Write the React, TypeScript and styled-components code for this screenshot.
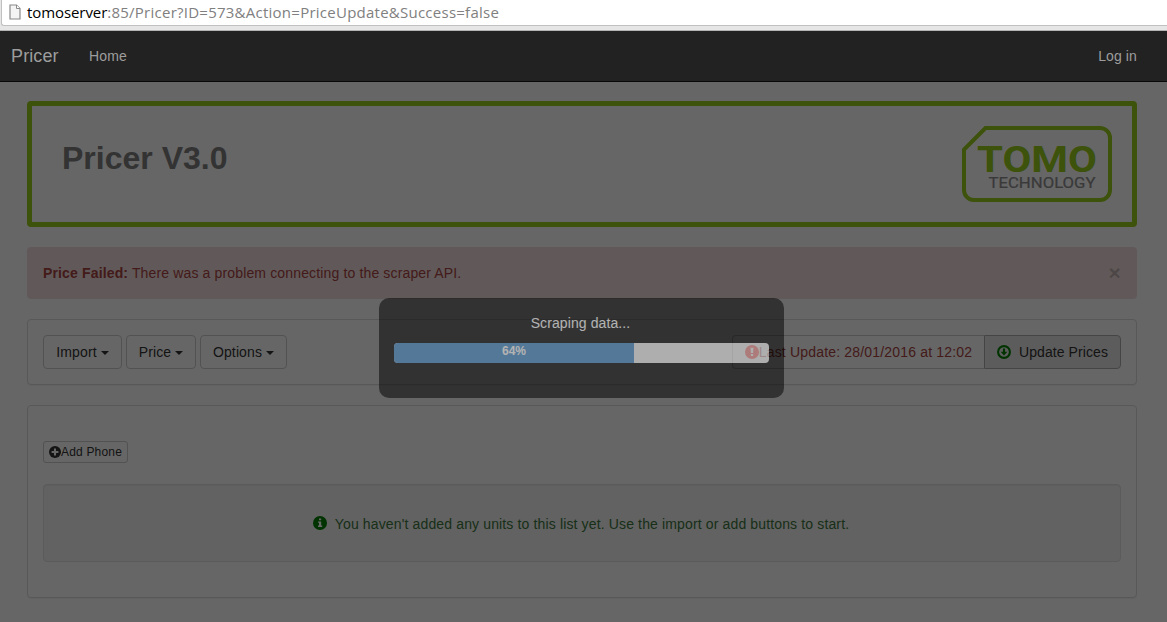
import React from "react";
import styled, { createGlobalStyle } from "styled-components";

const GlobalStyle = createGlobalStyle`
  *, *::before, *::after { box-sizing: border-box; }
  body {
    margin: 0;
    background: #fff;
    color: #333;
    font: 14px/20px "Liberation Sans", Arial, sans-serif;
    overflow: hidden;
  }
`;

const Page = styled.div`
  height: 622px;
  display: flex;
  flex-direction: column;
`;

const Chrome = styled.div`
  height: 31px;
  flex: none;
  padding: 0 0 5px 1px;
  background: #e6e6e6;
  border-bottom: 1px solid #b4b4b4;
`;

const AddressBar = styled.div`
  height: 26px;
  padding: 0 0 2px 7px;
  display: flex;
  align-items: center;
  gap: 6px;
  background: #fff;
  border: solid #c0c0c0;
  border-width: 0 0 1px 1px;
  border-radius: 0 0 0 3px;
`;

const Url = styled.span`
  font: 15px/24px "Open Sans", sans-serif;
  letter-spacing: 0.25px;
  color: #808080;
  white-space: nowrap;
`;

const Host = styled.span`
  color: #000;
  letter-spacing: -0.08px;
`;

const Navbar = styled.nav`
  height: 51px;
  flex: none;
  display: flex;
  align-items: center;
  padding: 0 30px 0 11px;
  background: #222;
  border-bottom: 1px solid #080808;
  color: #9d9d9d;
  letter-spacing: 0.12px;
`;

const Brand = styled.span`
  font-size: 18px;
  width: 78px;
`;

const NavLink = styled.span<{ $end?: boolean }>`
  margin-left: ${(p) => (p.$end ? "auto" : "0")};
`;

const Stage = styled.div`
  position: relative;
  flex: 1;
`;

const Content = styled.main`
  padding: 19px 30px 0 27px;
  display: flex;
  flex-direction: column;
  gap: 20px;
`;

const Header = styled.header`
  height: 126px;
  padding: 20px 20px 0 30px;
  display: flex;
  justify-content: space-between;
  align-items: flex-start;
  border: 5px solid #99cc1a;
  border-radius: 4px;
`;

const Title = styled.h1`
  margin: 13px 0 0;
  font-size: 32px;
  line-height: 38px;
  color: #808080;
`;

const Alert = styled.div`
  height: 52px;
  padding: 0 16px;
  display: flex;
  align-items: center;
  justify-content: space-between;
  border-radius: 4px;
  background: #f2dede;
  color: #a94442;
  letter-spacing: 0.145px;
`;

const Close = styled.span`
  font-size: 21px;
  font-weight: bold;
  color: #000;
  opacity: 0.2;
`;

const Panel = styled.section<{ $height: number; $top?: number }>`
  height: ${(p) => p.$height}px;
  padding: ${(p) => p.$top ?? 15}px 15px 0;
  border: 1px solid #ddd;
  border-radius: 4px;
  box-shadow: 0 1px 1px rgba(0, 0, 0, 0.05);
`;

const Toolbar = styled.div`
  display: flex;
  justify-content: space-between;
`;

const Menus = styled.div`
  display: flex;
  gap: 4px;
`;

const Button = styled.button<{ $width: number }>`
  width: ${(p) => p.$width}px;
  height: 34px;
  padding: 0;
  display: flex;
  align-items: center;
  justify-content: center;
  font: inherit;
  letter-spacing: 0.12px;
  color: #333;
  background: transparent;
  border: 1px solid #ccc;
  border-radius: 4px;
`;

const Caret = styled.i`
  margin: 1px 0 0 4px;
  border: solid transparent;
  border-width: 4px 4px 0;
  border-top-color: #333;
`;

const Group = styled.div`
  display: flex;
`;

const Status = styled(Button)`
  color: #a94442;
  letter-spacing: 0.18px;
  border-right: 0;
  border-radius: 4px 0 0 4px;
`;

const Update = styled(Button)`
  gap: 8px;
  letter-spacing: 0.08px;
  background: #e6e6e6;
  border-color: #adadad;
  border-radius: 0 4px 4px 0;
`;

const SmallButton = styled(Button)`
  height: 22px;
  font-size: 12px;
  letter-spacing: 0.18px;
  border-radius: 3px;
`;

const Well = styled.div`
  height: 78px;
  margin-top: 21px;
  padding-right: 2px;
  display: flex;
  align-items: center;
  justify-content: center;
  gap: 8px;
  color: #3c763d;
  letter-spacing: 0.14px;
  background: #f5f5f5;
  border: 1px solid #e3e3e3;
  border-radius: 4px;
  box-shadow: inset 0 1px 1px rgba(0, 0, 0, 0.05);
`;

const Message = styled.span`
  padding-top: 2px;
`;

const Backdrop = styled.div`
  position: absolute;
  inset: 0;
  background: rgba(0, 0, 0, 0.6);
`;

const Dialog = styled.div`
  position: absolute;
  left: 379px;
  top: 216px;
  width: 405px;
  height: 100px;
  padding: 15px;
  border-radius: 10px;
  background: #000;
  color: #fff;
  text-align: center;
  opacity: 0.5;
`;

const Caption = styled.div`
  padding-right: 2px;
  letter-spacing: 0.1px;
`;

const Track = styled.div`
  height: 20px;
  margin-top: 10px;
  overflow: hidden;
  border-radius: 4px;
  background: #f5f5f5;
`;

const Fill = styled.div`
  height: 100%;
  background: #428bca;
  font-size: 12px;
  line-height: 16px;
  font-weight: bold;
`;

const Glyph = ({ kind, color, size }: { kind: "alert" | "down" | "plus" | "info"; color: string; size: number }) => (
  <svg width={size} height={size} viewBox="0 0 14 14" style={{ flex: "none" }}>
    {kind === "down" ? (
      <>
        <circle cx="7" cy="7" r="5.9" fill="none" stroke={color} strokeWidth="2.1" />
        <path d="M5.9 3.5h2.2v3.2h2.3L7 10.5 3.6 6.7h2.3z" fill={color} />
      </>
    ) : (
      <circle cx="7" cy="7" r="7" fill={color} />
    )}
    {kind === "alert" && <path d="M5.5 2.8h3L8.1 8H5.9zM5.9 9h2.2v2.1H5.9z" fill="#fff" />}
    {kind === "plus" && <path d="M5.8 3h2.4v2.8H11v2.4H8.2V11H5.8V8.2H3V5.8h2.8z" fill="#fff" />}
    {kind === "info" && <path d="M6 2.5h2.2v1.8H6zM5 5.4h3.2v4.2h1V11H5V9.6h1V6.8H5z" fill="#fff" />}
  </svg>
);

const Logo = () => (
  <svg width="150" height="76" viewBox="0 0 150 76">
    <path
      d="M23.5 2H138a10 10 0 0 1 10 10V64a10 10 0 0 1-10 10H12a10 10 0 0 1-10-10V23.5Z"
      fill="none"
      stroke="#99cc1a"
      strokeWidth="4"
    />
    <text x="15" y="46" textLength="120" lengthAdjust="spacingAndGlyphs" fontFamily="Roboto, sans-serif" fontWeight="bold" fontSize="37" fill="#99cc1a">
      TOMO
    </text>
    <text x="26.5" y="62" textLength="107" lengthAdjust="spacingAndGlyphs" fontFamily="Roboto, sans-serif" fontSize="14" fill="#909090" stroke="#909090" strokeWidth=".2">
      TECHNOLOGY
    </text>
  </svg>
);

const PageIcon = () => (
  <svg width="12" height="16" viewBox="0 0 12 16">
    <path d="M1 1h6.5L11 4.5V15H1z" fill="#f4f4f4" stroke="#8a8a8a" strokeWidth="1.2" />
    <path d="M7.5 1v3.5H11" fill="#fff" stroke="#8a8a8a" />
  </svg>
);

const progress = 64;

export default function App() {
  return (
    <Page>
      <GlobalStyle />
      <Chrome>
        <AddressBar>
          <PageIcon />
          <Url>
            <Host>tomoserver</Host>:85/Pricer?ID=573&amp;Action=PriceUpdate&amp;Success=false
          </Url>
        </AddressBar>
      </Chrome>
      <Navbar>
        <Brand>Pricer</Brand>
        <NavLink>Home</NavLink>
        <NavLink $end>Log in</NavLink>
      </Navbar>
      <Stage>
        <Content>
          <Header>
            <Title>Pricer V3.0</Title>
            <Logo />
          </Header>
          <Alert>
            <span>
              <b>Price Failed:</b> There was a problem connecting to the scraper API.
            </span>
            <Close>×</Close>
          </Alert>
          <Panel $height={66}>
            <Toolbar>
              <Menus>
                <Button $width={79}>Import<Caret /></Button>
                <Button $width={70}>Price<Caret /></Button>
                <Button $width={87}>Options<Caret /></Button>
              </Menus>
              <Group>
                <Status $width={252}>
                  <Glyph kind="alert" color="#f00" size={14} />
                  Last Update: 28/01/2016 at 12:02
                </Status>
                <Update $width={137}>
                  <Glyph kind="down" color="green" size={14} />
                  Update Prices
                </Update>
              </Group>
            </Toolbar>
          </Panel>
          <Panel $height={193} $top={35}>
            <SmallButton $width={85}>
              <Glyph kind="plus" color="#333" size={12} />
              Add Phone
            </SmallButton>
            <Well>
              <Glyph kind="info" color="green" size={14} />
              <Message>You haven't added any units to this list yet. Use the import or add buttons to start.</Message>
            </Well>
          </Panel>
        </Content>
        <Backdrop />
        <Dialog>
          <Caption>Scraping data...</Caption>
          <Track>
            <Fill style={{ width: `${progress}%` }}>{progress}%</Fill>
          </Track>
        </Dialog>
      </Stage>
    </Page>
  );
}
